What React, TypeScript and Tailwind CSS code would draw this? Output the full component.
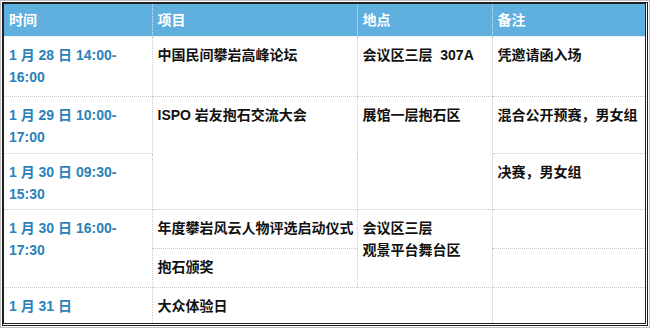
const font = {
  fontFamily: '"Liberation Sans", "Noto Sans CJK SC", sans-serif',
};

const th = "border border-dotted border-[#d6e6f0] px-[5px] text-left align-middle font-bold text-white";
const td = "border border-dotted border-[#c8c8c8] px-[5px] pt-[7px] align-top whitespace-nowrap";
const time = `${td} text-[#2b81b9]`;

export default function App() {
  return (
    <div
      className="w-[650px] h-[328px] border border-[#bdbdbd] p-px bg-white box-border"
      style={font}
    >
      <div className="w-full h-full border-l-2 border-t-2 border-r-[3px] border-b-[3px] border-double border-[#1f1f1f] box-border overflow-hidden">
        <table className="w-full h-full table-fixed border-collapse border-hidden text-[14px] leading-[22px] font-bold text-[#111]">
          <colgroup>
            <col className="w-[148px]" />
            <col className="w-[205px]" />
            <col className="w-[135px]" />
            <col />
          </colgroup>
          <thead>
            <tr className="h-[32px] bg-[#5fb0df]">
              <th className={th}>时间</th>
              <th className={th}>项目</th>
              <th className={th}>地点</th>
              <th className={th}>备注</th>
            </tr>
          </thead>
          <tbody>
            <tr className="h-[60px]">
              <td className={time}>
                1 月 28 日 14:00-
                <br />
                16:00
              </td>
              <td className={td}>中国民间攀岩高峰论坛</td>
              <td className={td}>会议区三层&nbsp;&nbsp;307A</td>
              <td className={td}>凭邀请函入场</td>
            </tr>
            <tr className="h-[57px]">
              <td className={time}>
                1 月 29 日 10:00-
                <br />
                17:00
              </td>
              <td className={td} rowSpan={2}>
                ISPO 岩友抱石交流大会
              </td>
              <td className={td} rowSpan={2}>
                展馆一层抱石区
              </td>
              <td className={td}>混合公开预赛，男女组</td>
            </tr>
            <tr className="h-[56px]">
              <td className={time}>
                1 月 30 日 09:30-
                <br />
                15:30
              </td>
              <td className={td}>决赛，男女组</td>
            </tr>
            <tr className="h-[39px]">
              <td className={time} rowSpan={2}>
                1 月 30 日 16:00-
                <br />
                17:30
              </td>
              <td className={td}>年度攀岩风云人物评选启动仪式</td>
              <td className={td} rowSpan={2}>
                会议区三层
                <br />
                观景平台舞台区
              </td>
              <td className={td}></td>
            </tr>
            <tr className="h-[39px]">
              <td className={td}>抱石颁奖</td>
              <td className={td}></td>
            </tr>
            <tr className="h-[36px]">
              <td className={time}>1 月 31 日</td>
              <td className={td} colSpan={2}>
                大众体验日
              </td>
              <td className={td}></td>
            </tr>
          </tbody>
        </table>
      </div>
    </div>
  );
}
